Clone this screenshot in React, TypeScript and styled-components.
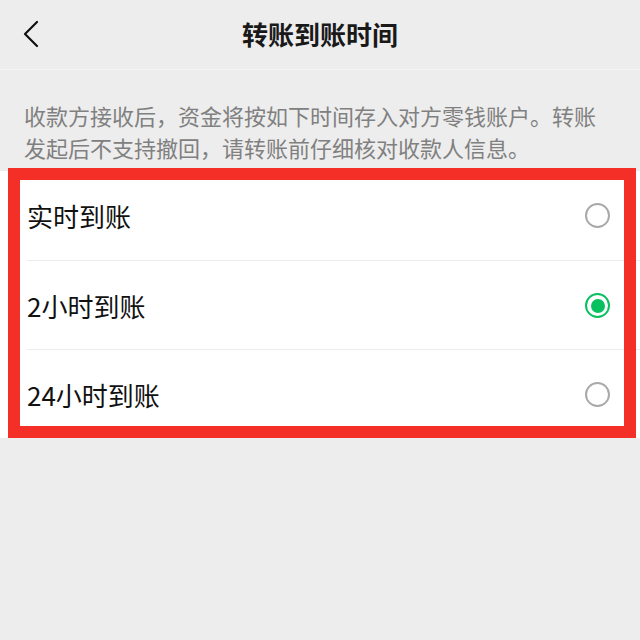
import * as React from 'react';
import styled, { createGlobalStyle } from 'styled-components';

const GlobalStyle = createGlobalStyle`
  html, body {
    margin: 0;
    padding: 0;
    background: #ededed;
  }
  body {
    font-family: "Noto Sans CJK SC", "Noto Sans", sans-serif;
    -webkit-font-smoothing: antialiased;
  }
`;

const Page = styled.div`
  width: 640px;
  min-height: 640px;
  background: #ededed;
`;

const NavBar = styled.header`
  height: 69px;
  display: grid;
  grid-template-columns: 80px 1fr 80px;
  align-items: center;
  border-bottom: 1px solid #f4f4f4;
`;

const BackButton = styled.button`
  border: 0;
  background: transparent;
  padding: 0 0 2px 22px;
  height: 100%;
  display: flex;
  align-items: center;
  color: #111;
  cursor: pointer;
`;

const Title = styled.h1`
  margin: 0;
  text-align: center;
  font-size: 26px;
  font-weight: 600;
  color: #191919;
  line-height: 1;
  padding-bottom: 2px;
`;

const Notice = styled.p`
  margin: 0;
  padding: 29px 24px 0 24px;
  font-size: 22px;
  line-height: 32px;
  color: #808080;
`;

const List = styled.ul`
  position: relative;
  list-style: none;
  margin: 8px 0 0;
  padding: 0;
  background: #fff;
`;

const Row = styled.li<{ $first?: boolean }>`
  height: 89px;
  display: flex;
  align-items: center;
  justify-content: space-between;
  padding: 0 30px 0 27px;
  box-sizing: border-box;
  border-top: ${({ $first }) => ($first ? 'none' : '1px solid #ececec')};
  margin-left: ${({ $first }) => ($first ? '0' : '27px')};
  padding-left: ${({ $first }) => ($first ? '27px' : '0')};
  padding-top: ${({ $first }) => ($first ? '0' : '1px')};
`;

const Label = styled.span`
  font-size: 26px;
  color: #111;
  line-height: 1;
`;

const Radio = styled.span<{ $checked?: boolean }>`
  width: 25px;
  height: 25px;
  box-sizing: border-box;
  border-radius: 50%;
  border: 2px solid ${({ $checked }) => ($checked ? '#07c160' : '#a9a9a9')};
  display: flex;
  align-items: center;
  justify-content: center;
  &::after {
    content: '';
    display: ${({ $checked }) => ($checked ? 'block' : 'none')};
    width: 14px;
    height: 14px;
    border-radius: 50%;
    background: #07c160;
  }
`;

// annotation frame drawn over the option list
const Highlight = styled.div`
  position: absolute;
  left: 8px;
  right: 4px;
  top: -3px;
  bottom: 0;
  border: 12px solid #f42f27;
  pointer-events: none;
`;

const options = [
  { id: 'now', label: '实时到账', checked: false },
  { id: '2h', label: '2小时到账', checked: true },
  { id: '24h', label: '24小时到账', checked: false },
];

function BackIcon() {
  return (
    <svg width='18' height='28' viewBox='0 0 18 28' fill='none'>
      <path
        d='M15 2 L3 14 L15 26'
        stroke='currentColor'
        strokeWidth='2.2'
        strokeLinecap='round'
        strokeLinejoin='round'
      />
    </svg>
  );
}

export default function App() {
  return (
    <Page>
      <GlobalStyle />
      <NavBar>
        <BackButton aria-label='返回'>
          <BackIcon />
        </BackButton>
        <Title>转账到账时间</Title>
        <span />
      </NavBar>
      <Notice>
        收款方接收后，资金将按如下时间存入对方零钱账户。转账发起后不支持撤回，请转账前仔细核对收款人信息。
      </Notice>
      <List>
        {options.map((o, i) => (
          <Row key={o.id} $first={i === 0}>
            <Label>{o.label}</Label>
            <Radio $checked={o.checked} />
          </Row>
        ))}
        <Highlight />
      </List>
    </Page>
  );
}
